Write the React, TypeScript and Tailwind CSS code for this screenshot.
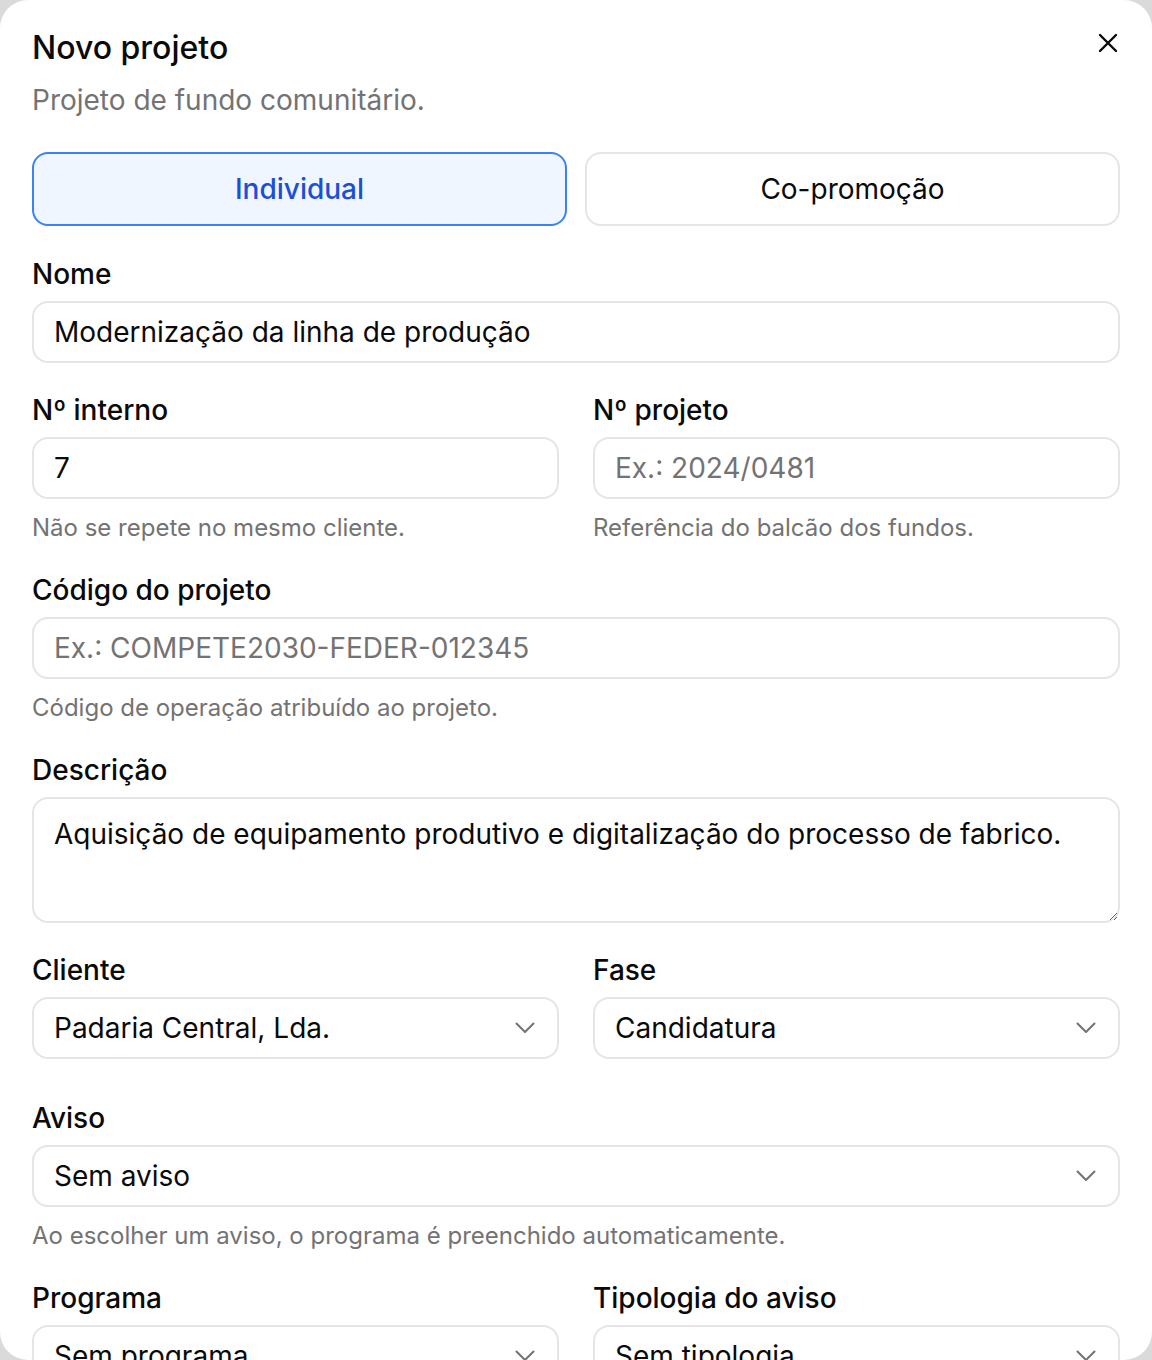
import React from "react";

function Chevron() {
  return (
    <svg width="20" height="12" viewBox="0 0 20 12" fill="none" className="shrink-0">
      <path d="M1.5 1.5 L10 10 L18.5 1.5" stroke="#737373" strokeWidth="2" strokeLinecap="round" strokeLinejoin="round" />
    </svg>
  );
}

function Label({ children }: { children: React.ReactNode }) {
  return <label className="block text-[28px] leading-[36px] font-medium text-[#0a0a0a] mb-[9px]">{children}</label>;
}

function Helper({ children }: { children: React.ReactNode }) {
  return <p className="mt-[13px] text-[24px] leading-[32px] text-[#737373]">{children}</p>;
}

function TextInput({ value, placeholder }: { value?: string; placeholder?: string }) {
  return (
    <input
      readOnly
      defaultValue={value}
      placeholder={placeholder}
      className="block w-full h-[62px] rounded-[16px] border-2 border-[#e5e5e5] bg-white px-[20px] text-[28px] text-[#0a0a0a] placeholder:text-[#737373] outline-none"
    />
  );
}

function Select({ value }: { value: string }) {
  return (
    <div className="flex items-center justify-between h-[62px] rounded-[16px] border-2 border-[#e5e5e5] bg-white pl-[20px] pr-[22px]">
      <span className="text-[28px] text-[#0a0a0a]">{value}</span>
      <Chevron />
    </div>
  );
}

export default function App() {
  return (
    <div className="w-[1152px] h-[1360px] bg-[#dadada]" style={{ fontFamily: "Inter, 'Noto Sans', sans-serif" }}>
      <div className="relative h-full overflow-hidden rounded-[28px] bg-white px-[32px] pt-[30px]">
        <button className="absolute right-[34px] top-[33px] w-[20px] h-[20px] flex items-center justify-center">
          <svg width="20" height="20" viewBox="0 0 20 20" fill="none">
            <path d="M2 2 L18 18 M18 2 L2 18" stroke="#0a0a0a" strokeWidth="2.4" strokeLinecap="round" />
          </svg>
        </button>

        <h2 className="text-[32px] leading-[36px] font-medium text-[#0a0a0a]">Novo projeto</h2>
        <p className="mt-[17px] text-[28px] leading-[34px] text-[#737373]">Projeto de fundo comunitário.</p>

        <div className="mt-[35px] grid grid-cols-2 gap-[18px]">
          <button className="h-[74px] rounded-[16px] border-2 border-[#3b82f6] bg-[#eff6ff] text-[28px] font-medium text-[#1d4ed8]">
            Individual
          </button>
          <button className="h-[74px] rounded-[16px] border-2 border-[#e5e5e5] bg-white text-[28px] text-[#0a0a0a]">
            Co-promoção
          </button>
        </div>

        <div className="mt-[30px]">
          <Label>Nome</Label>
          <TextInput value="Modernização da linha de produção" />
        </div>

        <div className="mt-[29px] grid grid-cols-2 gap-[34px]">
          <div>
            <Label>Nº interno</Label>
            <TextInput value="7" />
            <Helper>Não se repete no mesmo cliente.</Helper>
          </div>
          <div>
            <Label>Nº projeto</Label>
            <TextInput placeholder="Ex.: 2024/0481" />
            <Helper>Referência do balcão dos fundos.</Helper>
          </div>
        </div>

        <div className="mt-[28px]">
          <Label>Código do projeto</Label>
          <TextInput placeholder="Ex.: COMPETE2030-FEDER-012345" />
          <Helper>Código de operação atribuído ao projeto.</Helper>
        </div>

        <div className="mt-[28px]">
          <Label>Descrição</Label>
          <textarea
            readOnly
            defaultValue="Aquisição de equipamento produtivo e digitalização do processo de fabrico."
            className="block w-full h-[126px] rounded-[16px] border-2 border-[#e5e5e5] bg-white px-[20px] pt-[17px] text-[28px] leading-[36px] text-[#0a0a0a] outline-none resize-y"
          />
        </div>

        <div className="mt-[29px] grid grid-cols-2 gap-[34px]">
          <div>
            <Label>Cliente</Label>
            <Select value="Padaria Central, Lda." />
          </div>
          <div>
            <Label>Fase</Label>
            <Select value="Candidatura" />
          </div>
        </div>

        <div className="mt-[41px]">
          <Label>Aviso</Label>
          <Select value="Sem aviso" />
          <Helper>Ao escolher um aviso, o programa é preenchido automaticamente.</Helper>
        </div>

        <div className="mt-[28px] grid grid-cols-2 gap-[34px]">
          <div>
            <Label>Programa</Label>
            <Select value="Sem programa" />
          </div>
          <div>
            <Label>Tipologia do aviso</Label>
            <Select value="Sem tipologia" />
          </div>
        </div>
      </div>
    </div>
  );
}
